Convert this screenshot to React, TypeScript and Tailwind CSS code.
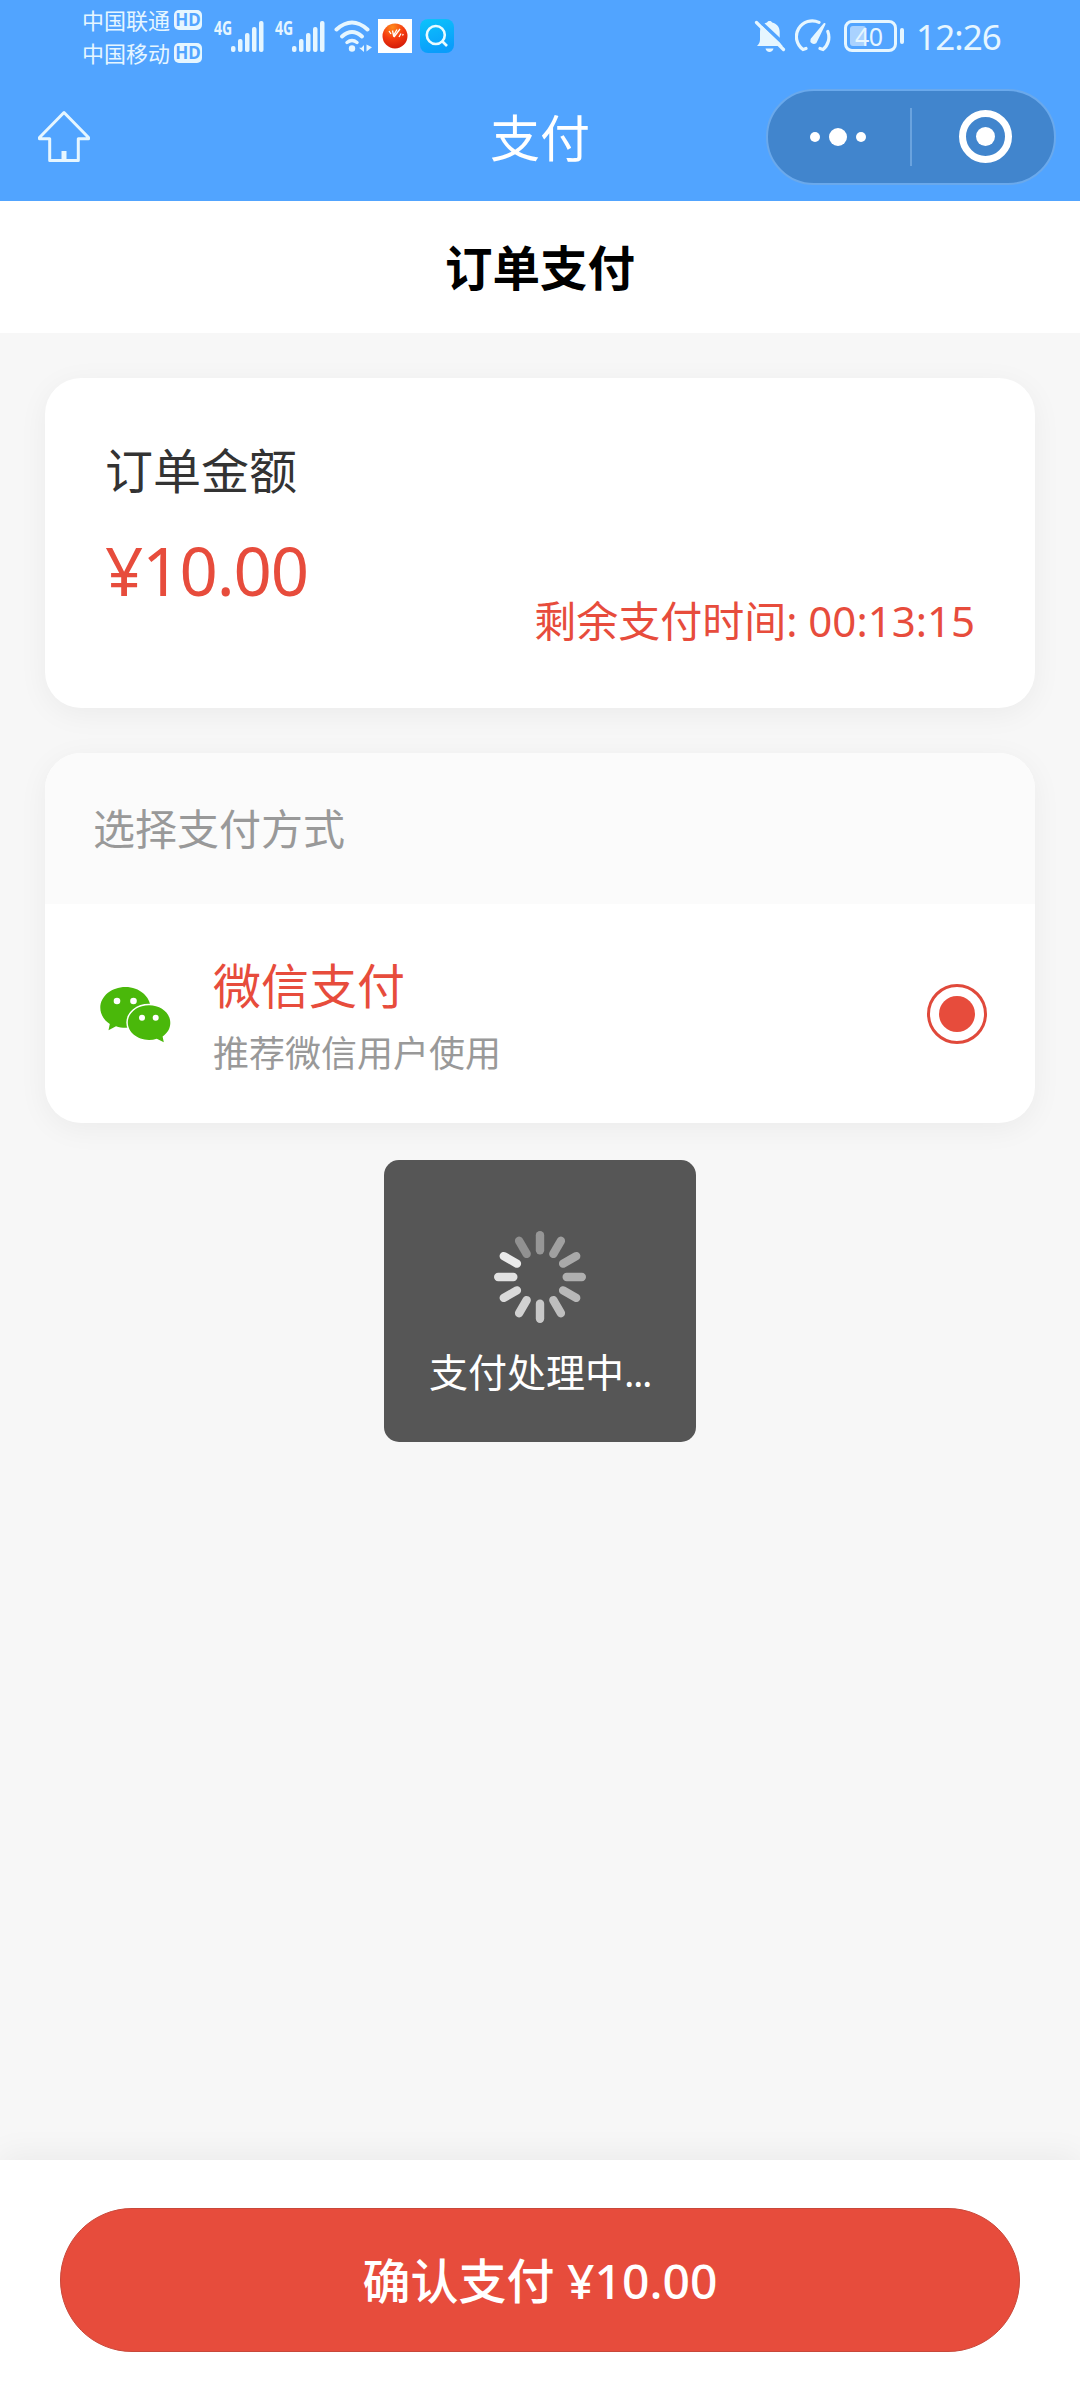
/**
 * 订单支付页 — 状态栏、导航栏、订单金额、支付方式、底部确认按钮。
 */
import type { ReactNode } from 'react';

const CARRIERS = ['中国联通', '中国移动'];

// 12 根刻度，从正上方顺时针
const SPINNER_OPACITY = [0.38, 0.44, 0.49, 0.53, 0.58, 0.62, 0.68, 0.73, 0.78, 0.83, 0.88, 0.35];

function Signal() {
  return (
    <div className="flex h-[34px] w-[50px] items-start">
      <span className="-mt-[4px] w-[17px] origin-left scale-x-[0.74] text-[19px] font-bold leading-[26px]">4G</span>
      <svg width="33" height="34" viewBox="17 0 33 34" fill="#e6f6ff">
        <rect x="17" y="27" width="4.5" height="6" rx="2" />
        <rect x="24" y="20" width="4.5" height="13" rx="2" />
        <rect x="31" y="14" width="4.5" height="19" rx="2" />
        <rect x="38" y="8" width="4.5" height="25" rx="2" />
        <rect x="45" y="2" width="4.5" height="31" rx="2" />
      </svg>
    </div>
  );
}

function Wifi() {
  return (
    <svg width="40" height="34" viewBox="0 0 40 34" fill="none" stroke="#e6f6ff" strokeWidth="4" strokeLinecap="round">
      <path d="M2.5 10.5 Q18 -3.5 33.5 10.5" />
      <path d="M8 17.5 Q18 8.5 28 17.5" />
      <path d="M13 23.5 Q18 19.5 23 23.5" strokeWidth="3.5" />
      <circle cx="18" cy="29.5" r="3.2" fill="#e6f6ff" stroke="none" />
      <path d="M30 26v7l-5-4.200h2.500zM32.500 25.500v7l5.500-4.200z" fill="#e6f6ff" stroke="none" />
    </svg>
  );
}

function StatusBar() {
  return (
    <div className="flex h-[72px] items-center justify-between pl-[82px] pr-[79px] text-[#e6f6ff]">
      <div className="flex items-center">
        <div className="flex flex-col gap-[11px]">
          {CARRIERS.map((name) => (
            <div key={name} className="flex h-[22px] items-center gap-[4px]">
              <span className="text-[22px] leading-[22px]">{name}</span>
              <span className="flex h-5 w-[28px] items-center justify-center rounded-[5px] bg-[#e6f6ff] text-[17px] font-bold leading-5 text-[#51a4ff]">
                HD
              </span>
            </div>
          ))}
        </div>
        <div className="ml-[12px] flex items-start gap-[11px]">
          <Signal />
          <Signal />
        </div>
        <div className="ml-[9px]">
          <Wifi />
        </div>
        <svg className="ml-[4px]" width="34" height="34" viewBox="0 0 34 34">
          <defs>
            <radialGradient id="ball" cx="0.4" cy="0.15" r="0.9">
              <stop offset="0" stopColor="#ff8a1c" />
              <stop offset="0.5" stopColor="#f53c10" />
              <stop offset="1" stopColor="#d01808" />
            </radialGradient>
          </defs>
          <rect width="34" height="34" fill="#fff" />
          <circle cx="17" cy="17" r="12.5" fill="url(#ball)" />
          <path d="M11 12l2 3M14.5 11.5l1 5 3.5-6M16 18l6-8M21 18l2-3.5M24.5 16.5l.8-1.5" fill="none" stroke="#fff" strokeWidth="1.3" />
        </svg>
        <svg className="ml-2" width="34" height="34" viewBox="0 0 34 34">
          <defs>
            <linearGradient id="lens" x1="0" y1="0" x2="0.3" y2="1">
              <stop offset="0" stopColor="#0cc4fb" />
              <stop offset="1" stopColor="#0a9dfb" />
            </linearGradient>
          </defs>
          <rect width="34" height="34" rx="8" fill="url(#lens)" />
          <circle cx="15.8" cy="16" r="9" fill="none" stroke="#e9fbff" strokeWidth="2.6" />
          <path d="M22 22l5 5" stroke="#e9fbff" strokeWidth="2.6" />
        </svg>
      </div>

      <div className="flex items-center">
        {/* 静音 */}
        <svg width="32" height="34" viewBox="0 0 32 34">
          <path d="M15.5 2c1.5 0 2.3.6 2.6 1.6 4.6 1 7.6 4.6 7.6 9.4v7.5c0 2.5 1 4.5 3 6.5H3c2-2 3-4 3-6.5V13c0-4.8 2.5-8.4 7-9.4.3-1 1.2-1.6 2.5-1.6z" fill="#e6f6ff" />
          <path d="M11.5 29.5h8c-.5 2.3-2 3.5-4 3.5s-3.5-1.2-4-3.5z" fill="#e6f6ff" />
          <path d="M5 1.5L32 27" stroke="#51a4ff" strokeWidth="3.5" />
          <path d="M2.5 3.5L29.5 30.5" stroke="#e6f6ff" strokeWidth="3.2" strokeLinecap="round" />
        </svg>
        {/* 性能仪表 */}
        <svg className="ml-[9px]" width="36" height="34" viewBox="0 0 36 34" fill="none" stroke="#e6f6ff" strokeWidth="3.2" strokeLinecap="round">
          <path d="M24 3.4A15.8 15.8 0 0 0 8 30.5L11 29.5" />
          <path d="M32.8 12.500A15.800 15.800 0 0 1 28 30.500L25 29.500" />
          <path d="M29.5 5L16.500 20.500a2.600 2.600 0 0 0 4 3z" fill="#e6f6ff" strokeWidth="2" strokeLinejoin="round" />
        </svg>
        {/* 电池 */}
        <div className="ml-[13px] flex items-center gap-[3px]">
          <div className="flex h-8 w-[53px] items-center rounded-[8px] border-[3px] border-[#e6f6ff] px-[3px]">
            <div className="h-5 w-4 rounded-[3px] bg-[#a9d2ff]" />
            <span className="-ml-[11px] text-[25px] leading-6 tracking-[-0.5px]">40</span>
          </div>
          <div className="h-4 w-1 rounded-[2px] bg-[#e6f6ff]" />
        </div>
        <span className="ml-[12px] pt-[2px] text-[35px] leading-9 tracking-[-0.9px]">12:26</span>
      </div>
    </div>
  );
}

function NavBar() {
  return (
    <div className="grid h-[129px] grid-cols-[1fr_auto_1fr] items-center px-[24px]">
      <svg className="-mt-[2px] ml-[12px]" width="56" height="56" viewBox="0 0 56 56" fill="none" stroke="#e6f6ff" strokeWidth="3" strokeLinejoin="round">
        <path d="M28 4.5L3.5 29.5v1.3h10.2V52.5h28.6V30.8h10.2v-1.3z" />
        <path d="M28 43v9" strokeWidth="5" />
      </svg>
      <h1 className="pt-[3px] text-[50px] leading-[60px] text-white">支付</h1>
      <div className="flex h-24 w-[290px] items-center justify-self-end rounded-full border-2 border-[#6aa9ec] bg-[#4185cd]">
        <div className="flex w-[142px] items-center justify-center gap-[9px] pr-[2px]">
          <i className="size-2.5 rounded-full bg-white" />
          <i className="size-[18px] rounded-full bg-white" />
          <i className="size-2.5 rounded-full bg-white" />
        </div>
        <div className="h-[58px] w-[2px] bg-[#6aa3de]" />
        <div className="flex flex-1 items-center justify-center pl-1">
          <div className="flex size-[53px] items-center justify-center rounded-full border-[7px] border-white">
            <i className="size-[19px] rounded-full bg-white" />
          </div>
        </div>
      </div>
    </div>
  );
}

function Card({ className, children }: { className: string; children: ReactNode }) {
  return (
    <section className={`overflow-hidden rounded-[36px] bg-white shadow-[0_6px_30px_rgba(0,0,0,0.05)] ${className}`}>
      {children}
    </section>
  );
}

function WechatIcon() {
  return (
    <svg width="72" height="72" viewBox="0 0 72 72" fill="#4ab80a">
      <path d="M26.5 9C12.5 9 1.3 18.3 1.3 29.8c0 6.6 3.7 12.4 9.5 16.2L9.5 52.3l7.5-4c3 1 6.1 1.5 9.5 1.5 14 0 25-9 25-20S40.5 9 26.5 9z" />
      <path d="M50 27.3c11.9 0 21.3 7.800 21.3 17.6 0 5.7-3.1 10.3-7.7 13.5l1.2 5.9-7-3.6c-2.5.8-5 1.2-7.8 1.2-11.9 0-21.2-7.8-21.2-17.3S38.1 27.3 50 27.3z" stroke="#fff" strokeWidth="3" paintOrder="stroke" />
      <g fill="#fff">
        <circle cx="18" cy="23" r="3.3" />
        <circle cx="34.5" cy="23" r="3.3" />
        <circle cx="43" cy="39.7" r="3" />
        <circle cx="56.7" cy="39.7" r="3" />
      </g>
    </svg>
  );
}

function LoadingToast() {
  return (
    <div className="absolute left-[384px] top-[1160px] flex h-[282px] w-[312px] flex-col items-center rounded-[15px] bg-[#565656] pt-[69px]">
      <svg width="96" height="96" viewBox="-48 -48 96 96">
        {SPINNER_OPACITY.map((opacity, i) => (
          <rect key={i} x="-4.2" y="-46" width="8.4" height="23.5" rx="4.2" fill="#fff" opacity={opacity} transform={`rotate(${i * 30})`} />
        ))}
      </svg>
      <span className="mt-[23px] text-[39px] leading-[48px] text-white">
        支付处理中<span className="tracking-[-1.5px]">...</span>
      </span>
    </div>
  );
}

export default function App() {
  return (
    <div className="relative flex h-[2400px] w-[1080px] flex-col overflow-hidden bg-[#f7f7f7] font-['Noto_Sans','Noto_Sans_CJK_SC',sans-serif]">
      <header className="bg-[#51a4ff]">
        <StatusBar />
        <NavBar />
      </header>

      <div className="flex h-[132px] items-center justify-center bg-white">
        <h2 className="pt-[2px] text-[47.5px] font-bold leading-[60px] text-black">订单支付</h2>
      </div>

      <main className="flex flex-1 flex-col gap-[45px] px-[45px] pt-[45px]">
        <Card className="flex h-[330px] flex-col px-[60px] pt-[63px]">
          <div className="text-[48px] leading-[60px] text-[#333]">订单金额</div>
          <div className="mt-[29px] text-[67px] leading-[80px] tracking-[-1.1px] text-[#e74c3c]">¥10.00</div>
          <div className="-mt-[14px] self-end text-[42px] leading-[50px] text-[#e74c3c]">剩余支付时间: 00:13:15</div>
        </Card>

        <Card className="h-[370px]">
          <div className="flex h-[151px] items-center bg-[#fbfbfb] px-12 text-[42px] leading-[50px] text-[#999]">选择支付方式</div>
          <div className="flex h-[219px] items-center px-12">
            <div className="ml-[6px]">
              <WechatIcon />
            </div>
            <div className="ml-[42px] flex-1 pt-[3px]">
              <div className="text-[48px] leading-[72px] text-[#e74c3c]">微信支付</div>
              <div className="mt-[5px] text-[36px] leading-[54px] text-[#999]">推荐微信用户使用</div>
            </div>
            <div className="flex size-[60px] items-center justify-center rounded-full border-[3px] border-[#e0493b]">
              <i className="size-9 rounded-full bg-[#e74c3c]" />
            </div>
          </div>
        </Card>
      </main>

      <footer className="h-[240px] bg-white px-[60px] pt-12 shadow-[0_-6px_30px_rgba(0,0,0,0.05)]">
        <button className="flex h-36 w-full items-center justify-center rounded-full border border-[#c9483a] bg-[#e74c3c] pt-[2px] text-[48px] font-medium leading-[60px] text-white">
          确认支付 ¥10.00
        </button>
      </footer>

      <LoadingToast />
    </div>
  );
}
